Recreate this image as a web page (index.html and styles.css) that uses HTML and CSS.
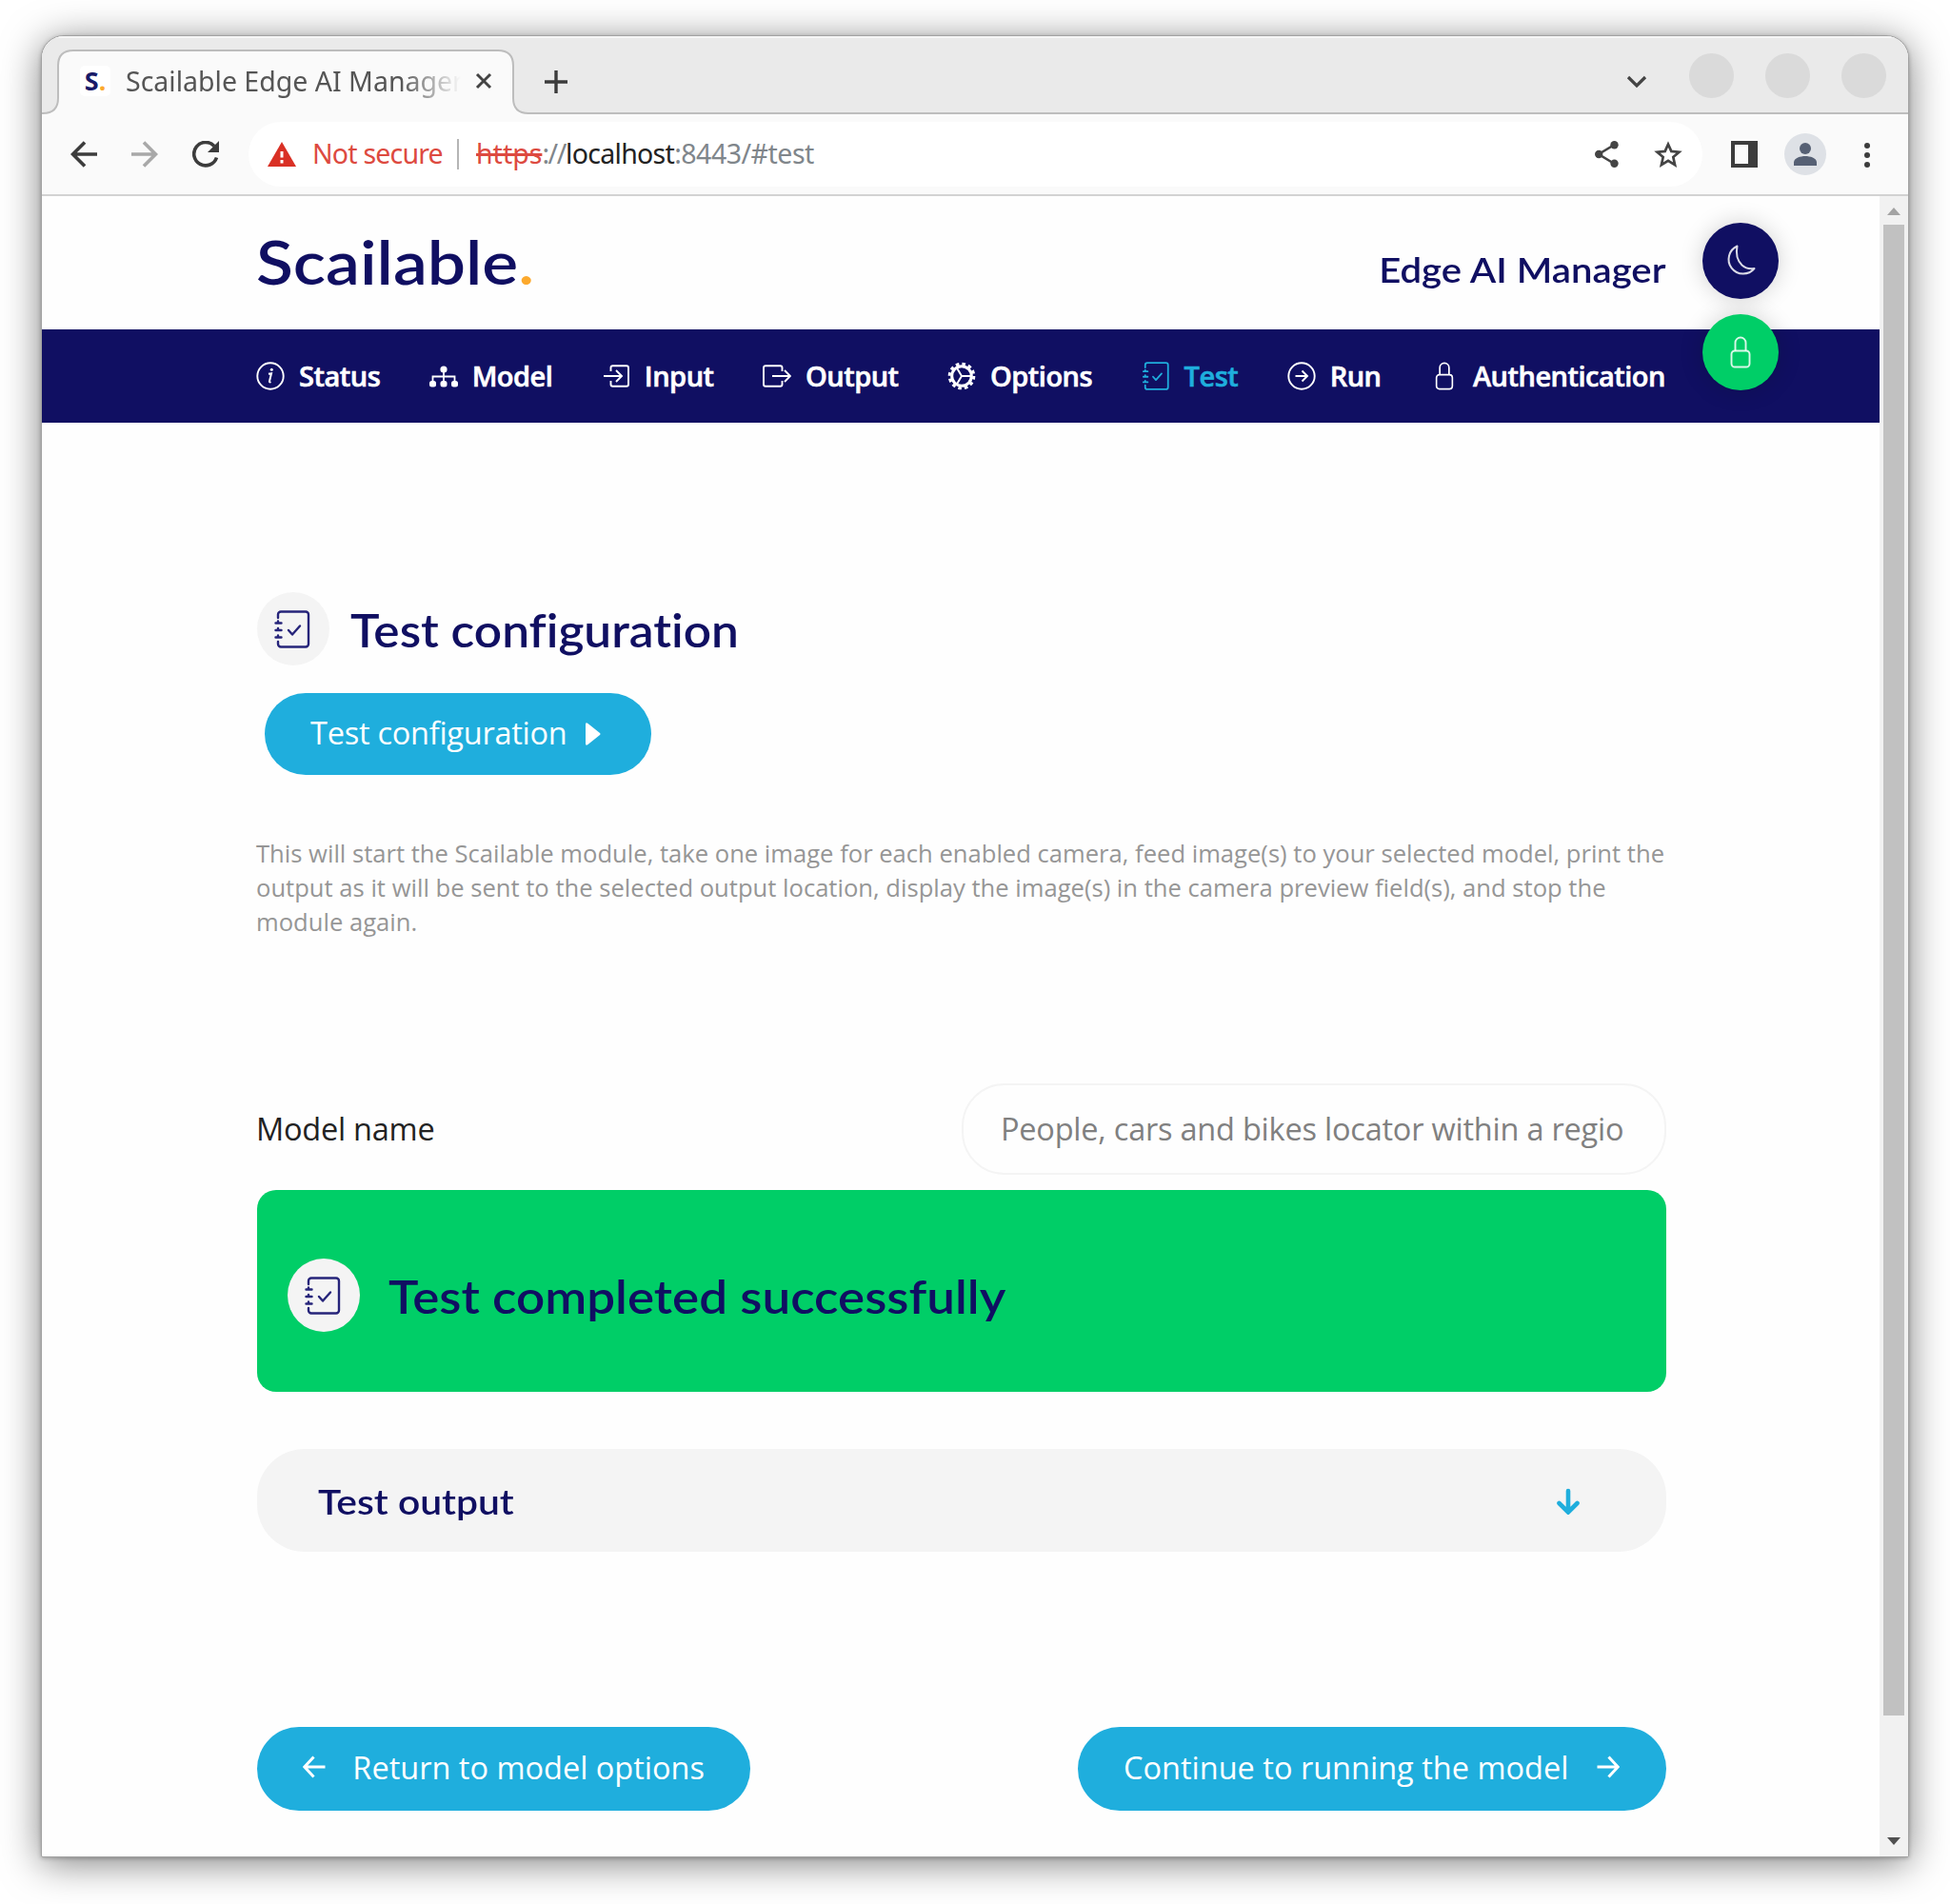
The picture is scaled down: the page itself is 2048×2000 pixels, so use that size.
FILE: index.html
```html
<!DOCTYPE html>
<html lang="en">
<head>
<meta charset="utf-8">
<title>Scailable Edge AI Manager</title>
<link rel="stylesheet" href="styles.css">
</head>
<body>
<svg class="defs" width="0" height="0">
  <symbol id="journal" viewBox="0 0 38 40">
    <g fill="none" stroke="currentColor" stroke-linecap="round" stroke-linejoin="round">
      <path d="M4 8V4.500a3 3 0 0 1 3-3H33a3 3 0 0 1 3 3V35.500a3 3 0 0 1-3 3H7a3 3 0 0 1-3-3V33"/>
      <path d="M1.500 13.500h6M1.500 21h6M1.500 28.500h6M4 11.500v2M4 19v2M4 26.500v2"/>
      <path d="M15 21l4 4.500 8-9"/>
    </g>
  </symbol>
  <symbol id="lock" viewBox="0 0 22 34">
    <g fill="none" stroke="currentColor" stroke-width="1.900"><rect x="1.500" y="15.500" width="19" height="17" rx="3.500"/><path d="M5.500 15.500V7a5.500 5.500 0 0 1 11 0v8.500"/></g>
  </symbol>
</svg>
<div class="window">
  <div class="tabstrip">
    <div class="tab">
      <svg class="tab-shape" width="514" height="68" viewBox="0 0 514 68"><path d="M0 68V67H1Q17 67 17 51V17Q17 1 33 1H479Q495 1 495 17V51Q495 67 511 67H514V68z" fill="#fafafa"/><path d="M0 67H1Q17 67 17 51V17Q17 1 33 1H479Q495 1 495 17V51Q495 67 511 67H514" fill="none" stroke="#bdbdbd" stroke-width="2"/></svg>
      <span class="favicon">S<i>.</i></span>
      <span class="tab-title">Scailable Edge AI Manager</span>
      <svg class="close" width="18" height="18" viewBox="0 0 18 18"><path d="M2 2l14 14M16 2L2 16" stroke="#444" stroke-width="3"/></svg>
    </div>
    <svg class="plus" width="24" height="24" viewBox="0 0 24 24"><path d="M12 0v24M0 12h24" stroke="#3c3c3c" stroke-width="3.400"/></svg>
    <svg class="chev" width="22" height="14" viewBox="0 0 22 14"><path d="M2 2l9 9 9-9" fill="none" stroke="#444" stroke-width="3.200"/></svg>
    <span class="wbtn"></span><span class="wbtn"></span><span class="wbtn"></span>
  </div>
  <div class="toolbar">
    <svg class="nav-btn" width="28" height="28" viewBox="0 0 28 28"><path d="M28 14H3M15 1.500L2.500 14 15 26.500" fill="none" stroke="#3c3c3c" stroke-width="3.600"/></svg>
    <svg class="nav-btn" width="28" height="28" viewBox="0 0 28 28"><path d="M0 14h25M13 1.500L25.500 14 13 26.500" fill="none" stroke="#a8a8a8" stroke-width="3.600"/></svg>
    <svg class="nav-btn" width="28" height="28" viewBox="0 0 28 28"><path d="M25.500 17.500A12.200 12.200 0 1 1 23 5.500" fill="none" stroke="#3c3c3c" stroke-width="3.600"/><path d="M28 0v12H16z" fill="#3c3c3c"/></svg>
    <div class="address">
      <svg width="30" height="26" viewBox="0 0 30 26"><path d="M15 0l15 26H0z" fill="#d93025"/><path d="M15 10v6.500M15 19v3.500" stroke="#fff" stroke-width="3"/></svg>
      <span class="insecure">Not secure</span>
      <span class="sep"></span>
      <span class="url"><span class="scheme">https</span><span class="slashes">://</span><b>localhost</b><span class="path">:8443/#test</span></span>
      <svg class="share" width="25" height="28" viewBox="0 0 25 28"><path d="M20.500 4L4 14l16.500 10" fill="none" stroke="#444" stroke-width="2.600"/><circle cx="20.500" cy="4.200" r="4.200" fill="#444"/><circle cx="4.200" cy="14" r="4.200" fill="#444"/><circle cx="20.500" cy="23.800" r="4.200" fill="#444"/></svg>
      <svg width="30" height="28" viewBox="0 0 30 28"><path d="M15 3.500l3.300 7.400 8.200.8-6.200 5.400 1.800 8.100-7.100-4.300-7.100 4.300 1.800-8.100-6.200-5.400 8.200-.8z" fill="none" stroke="#444" stroke-width="2.700"/></svg>
    </div>
    <svg class="panel" width="28" height="28" viewBox="0 0 28 28"><path d="M0 0h28v28H0zM4 4v20h14V4z" fill="#3c3c3c" fill-rule="evenodd"/></svg>
    <svg class="avatar" width="44" height="44" viewBox="0 0 44 44"><circle cx="22" cy="22" r="22" fill="#dee1e6"/><circle cx="22" cy="16" r="6" fill="#566074"/><path d="M10 34v-3.500c0-4.500 7-6.500 12-6.500s12 2 12 6.500V34z" fill="#566074"/></svg>
    <svg class="dots" width="6" height="28" viewBox="0 0 6 28"><g fill="#3c3c3c"><circle cx="3" cy="5" r="3"/><circle cx="3" cy="15" r="3"/><circle cx="3" cy="25" r="3"/></g></svg>
  </div>
  <div class="viewport">
    <div class="page">
      <header class="head"><div class="brand">Scailable<i>.</i></div><div class="product">Edge AI Manager</div></header>
      <nav class="menu">
        <a><svg width="30" height="30" viewBox="0 0 30 30"><circle cx="15" cy="15" r="13.700" fill="none" stroke="currentColor" stroke-width="1.900"/><path d="M13 12.800l3-.6-2 8.300q-.3 1.500 1.500.6" fill="none" stroke="currentColor" stroke-width="2"/><circle cx="16.300" cy="8.300" r="1.500" fill="currentColor"/></svg><span>Status</span></a>
        <a><svg width="30" height="30" viewBox="0 0 30 30"><g fill="currentColor"><circle cx="15" cy="8" r="3.600"/><rect x="0" y="20" width="7" height="6.500" rx="2.500"/><rect x="11.500" y="20" width="7" height="6.500" rx="2.500"/><rect x="23" y="20" width="7" height="6.500" rx="2.500"/></g><path d="M15 10v11M3.500 21v-5.500h23V21" fill="none" stroke="currentColor" stroke-width="1.800"/></svg><span>Model</span></a>
        <a><svg width="30" height="30" viewBox="0 0 30 30"><path d="M9.500 10V6.200a2 2 0 0 1 2-2H26a2 2 0 0 1 2 2v17.600a2 2 0 0 1-2 2H11.500a2 2 0 0 1-2-2V20M2 15h18.500M15 9l6 6-6 6" fill="none" stroke="currentColor" stroke-width="1.900"/></svg><span>Input</span></a>
        <a><svg width="30" height="30" viewBox="0 0 30 30"><path d="M20.500 10V6.200a2 2 0 0 0-2-2H3a2 2 0 0 0-2 2v17.600a2 2 0 0 0 2 2h15.500a2 2 0 0 0 2-2V20M10 15h18.500M23 9l6 6-6 6" fill="none" stroke="currentColor" stroke-width="1.900"/></svg><span>Output</span></a>
        <a><svg width="30" height="30" viewBox="0 0 30 30"><g fill="none" stroke="currentColor"><circle cx="15" cy="15" r="10.300" stroke-width="3"/><circle cx="15" cy="15" r="12.800" stroke-width="3" stroke-dasharray="3.600 3.102"/><path d="M15 15h10M15 15l-5.200-8.800M15 15l-5.200 8.800" stroke-width="2"/></g></svg><span>Options</span></a>
        <a class="active"><svg width="30" height="30" viewBox="0 0 38 40" stroke-width="2.400"><use href="#journal" width="38" height="40"/></svg><span>Test</span></a>
        <a><svg width="30" height="30" viewBox="0 0 30 30"><g fill="none" stroke="currentColor" stroke-width="1.900"><circle cx="15" cy="15" r="13.700"/><path d="M8.500 15h12M15.500 9.500l5.500 5.500-5.500 5.500"/></g></svg><span>Run</span></a>
        <a><svg width="30" height="30" viewBox="0 0 30 30"><use href="#lock" x="5.200" width="19.600" height="30"/></svg><span>Authentication</span></a>
      </nav>
      <div class="fabs">
        <span class="fab dark"><svg width="32" height="34" viewBox="0 0 32 34"><path d="M12.500 1.500A15.200 15.200 0 1 0 30.500 25Q23 26.500 17.500 21.500Q10 14 12.500 1.500z" fill="none" stroke="#fff" stroke-opacity=".85" stroke-width="2" stroke-linejoin="round"/></svg></span>
        <span class="fab green"><svg width="22" height="34"><use href="#lock"/></svg></span>
      </div>
      <main class="content">
        <h1 class="title"><span class="round"><svg width="38" height="40" stroke-width="2.400"><use href="#journal"/></svg></span><span class="title-text">Test configuration</span></h1>
        <button class="pill test"><span>Test configuration</span><svg width="16" height="24" viewBox="0 0 16 24"><path d="M0 2Q0-1 2.500 1L15 11q1 1 0 2L2.500 23Q0 25 0 22z" fill="#fff"/></svg></button>
        <p class="help">This will start the Scailable module, take one image for each enabled camera, feed image(s) to your selected model, print the<br>output as it will be sent to the selected output location, display the image(s) in the camera preview field(s), and stop the<br>module again.</p>
        <div class="field"><label>Model name</label><div class="input"><span>People, cars and bikes locator within a region</span></div></div>
        <section class="success"><span class="round"><svg width="38" height="40" stroke-width="2.400"><use href="#journal"/></svg></span><h2>Test completed successfully</h2></section>
        <section class="output"><h3>Test output</h3><svg width="24" height="28" viewBox="0 0 24 28"><path d="M12 3v21M2.500 16l9.500 9.500 9.500-9.500" fill="none" stroke="#1faedd" stroke-width="4.600" stroke-linecap="round"/></svg></section>
        <div class="actions">
          <button class="pill back"><svg width="24" height="24" viewBox="0 0 24 24"><path d="M23.500 12H2M11.500 1.500L1.800 12l9.700 10.500" fill="none" stroke="#fff" stroke-width="3"/></svg><span>Return to model options</span></button>
          <button class="pill next"><span>Continue to running the model</span><svg width="24" height="24" viewBox="0 0 24 24"><path d="M.5 12H22M12.500 1.500L22.200 12l-9.700 10.500" fill="none" stroke="#fff" stroke-width="3"/></svg></button>
        </div>
      </main>
    </div>
    <div class="scrollbar"><svg width="14" height="8" viewBox="0 0 14 8"><path d="M7 0l7 8H0z" fill="#a3a3a3"/></svg><span class="thumb"></span><svg class="down" width="14" height="8" viewBox="0 0 14 8"><path d="M0 0h14L7 8z" fill="#505050"/></svg></div>
  </div>
</div>
</body>
</html>
```
FILE: styles.css
```css
* { box-sizing: border-box; }
body { margin: 0; background: #fff; font-family: "Open Sans", "Noto Sans", sans-serif; width: 2048px; height: 2000px; overflow: hidden; display: flow-root; }
i { font-style: normal; color: #fca92d; }
svg { display: block; flex: none; }
.defs { position: absolute; }
h1, h2, h3, p { margin: 0; }
.window { margin: 37px 0 0 43px; width: 1962px; height: 1914px; border: 1px solid #a2a2a2; border-radius: 24px 24px 2px 2px; overflow: hidden; background: #fefefe; box-shadow: 0 6px 40px rgba(0,0,0,.5), 0 1px 4px rgba(0,0,0,.25); display: flex; flex-direction: column; }

.tabstrip { height: 82px; flex: none; background: #eaeaea; border-bottom: 2px solid #bdbdbd; box-shadow: inset 0 2px 0 #f6f6f6; display: flex; align-items: flex-start; font-family: "Noto Sans", sans-serif; }
.tab { position: relative; margin-top: 14px; width: 514px; height: 68px; display: flex; align-items: center; padding: 0 0 2px 40px; }
.tab-shape { position: absolute; left: 0; top: 0; }
.tab > :not(.tab-shape) { position: relative; }
.favicon { width: 32px; height: 32px; border-radius: 5px; background: #fff; font: 700 27px/31px "Noto Sans", sans-serif; color: #181a68; text-align: center; flex: none; }
.tab-title { flex: none; width: 352px; margin-left: 16px; font-size: 28.500px; line-height: 40px; color: #555; white-space: nowrap; overflow: hidden; -webkit-mask-image: linear-gradient(90deg, #000 82%, transparent 100%); mask-image: linear-gradient(90deg, #000 82%, transparent 100%); }
.close { margin-left: 15px; }
.plus { margin: 36px 0 0 14px; }
.chev { margin: 41px 11px 0 auto; }
.wbtn { width: 47px; height: 47px; border-radius: 50%; background: #dadada; margin: 18px 0 0 33px; }
.wbtn:last-child { margin-right: 23px; }

.toolbar { height: 86px; flex: none; background: #fafafa; border-bottom: 2px solid #d2d2d2; display: flex; align-items: center; padding-left: 30px; font-family: "Noto Sans", sans-serif; }
.nav-btn { margin-right: 36px; }
.address { width: 1527px; height: 68px; margin-left: -5px; border-radius: 34px; background: #fff; display: flex; align-items: center; padding-left: 20px; font-size: 28.500px; }
.insecure { margin-left: 17px; width: 136px; color: #dd4a40; white-space: nowrap; letter-spacing: -.8px; margin-top: -2px; }
.sep { width: 2px; height: 32px; background: #b5b5b5; margin: 0 18px 0 16px; }
.url { color: #80868b; white-space: nowrap; display: flex; margin-top: -2px; }
.url b { font-weight: 400; color: #222; letter-spacing: -.7px; }
.scheme { color: #dd4a40; text-decoration: line-through; text-decoration-thickness: 3px; }
.slashes { letter-spacing: -1.400px; }
.path { letter-spacing: -.5px; }
.share { margin: 0 37px 0 auto; }
.share + svg { margin-right: 21px; }
.panel { margin-left: 30px; }
.avatar { margin-left: 28px; }
.dots { margin-left: 40px; }

.viewport { flex: 1; display: flex; min-height: 0; }
.page { position: relative; flex: 1; color: #100f62; }
.head { height: 140px; padding: 0 225px 0 225px; display: flex; justify-content: space-between; align-items: center; font-family: Lato, sans-serif; font-weight: 600; white-space: nowrap; font-variant-ligatures: none; }
.brand { font-size: 63px; line-height: 80px; padding-bottom: 3px; transform: scaleX(1.133); transform-origin: left; }
.product { font-size: 36px; line-height: 50px; padding-top: 13px; transform: scaleX(1.114); transform-origin: right; }
.menu { height: 98px; background: #100f62; padding: 0 225px 0 225px; display: flex; justify-content: space-between; align-items: center; color: #fff; font-size: 29px; font-weight: 600; letter-spacing: -.5px; }
.menu a { display: flex; align-items: center; gap: 15px; }
.menu span { -webkit-text-stroke: .6px currentColor; padding-bottom: 2px; }
.menu .active { color: #1faedd; }
.fabs { position: absolute; left: 1744px; top: 28px; display: grid; gap: 16px; }
.fab { width: 80px; height: 80px; border-radius: 50%; display: grid; place-items: center; color: rgba(255,255,255,.85); box-shadow: 0 0 24px rgba(0,0,0,.18); }
.dark { background: #100f62; }
.green { background: #00ce67; }

.content { padding: 178px 224px 0 226px; }
.title { display: flex; align-items: center; gap: 22px; height: 77px; font: 600 48px/60px Lato, sans-serif; white-space: nowrap; font-variant-ligatures: none; }
.title-text { padding-top: 2px; transform: scaleX(1.07); transform-origin: left; }
.round { width: 76px; height: 77px; border-radius: 50%; background: #f4f4f4; display: grid; place-items: center; padding-right: 3px; color: #26247a; }
.pill { border: 0; border-radius: 45px; background: #1faedd; color: #fff; font: 400 32.500px/44px "Open Sans", sans-serif; display: flex; align-items: center; white-space: nowrap; padding: 0 49px; }
.pill span { padding-bottom: 3px; }
.test { margin: 29px 0 0 8px; width: 406px; height: 86px; padding: 0 53px 0 48px; justify-content: space-between; letter-spacing: -.25px; }
.help { margin: 65px 0 0 -1px; font-size: 25.600px; line-height: 36px; color: #969696; white-space: nowrap; }
.field { margin: 151px 0 0 -1px; display: flex; justify-content: space-between; align-items: center; font-size: 32.500px; color: #222; white-space: nowrap; letter-spacing: -.25px; }
.field label { padding-bottom: 2px; }
.input { width: 740px; height: 96px; border: 2px solid #f4f4f4; border-radius: 45px; padding: 0 41px 2px 39px; color: #808080; display: flex; align-items: center; letter-spacing: -.22px; }
.input span { overflow: hidden; }
.success { margin-top: 16px; height: 212px; border-radius: 20px; background: #00ce67; display: flex; align-items: center; padding: 9px 32px 0; gap: 30px; }
.success h2 { font: 600 48px/60px Lato, sans-serif; white-space: nowrap; padding-top: 3px; font-variant-ligatures: none; transform: scaleX(1.104); transform-origin: left; }
.output { margin-top: 60px; height: 108px; border-radius: 50px; background: #f4f4f4; display: flex; align-items: center; justify-content: space-between; padding: 1px 91px 0 64px; }
.output h3 { font: 600 36px/50px Lato, sans-serif; transform: scaleX(1.133); transform-origin: left; }
.actions { margin-top: 184px; display: flex; justify-content: space-between; }
.actions .pill { height: 88px; justify-content: space-between; }
.actions svg { margin-bottom: 4px; }
.back { width: 518px; padding: 0 48px 0 48px; }
.next { width: 618px; padding-left: 48px; }

.scrollbar { width: 30px; background: #f1f1f1; display: flex; flex-direction: column; align-items: center; padding-top: 12px; }
.thumb { width: 22px; height: 1566px; margin-top: 10px; background: #c1c1c1; }
.down { margin-top: auto; margin-bottom: 12px; }
```
